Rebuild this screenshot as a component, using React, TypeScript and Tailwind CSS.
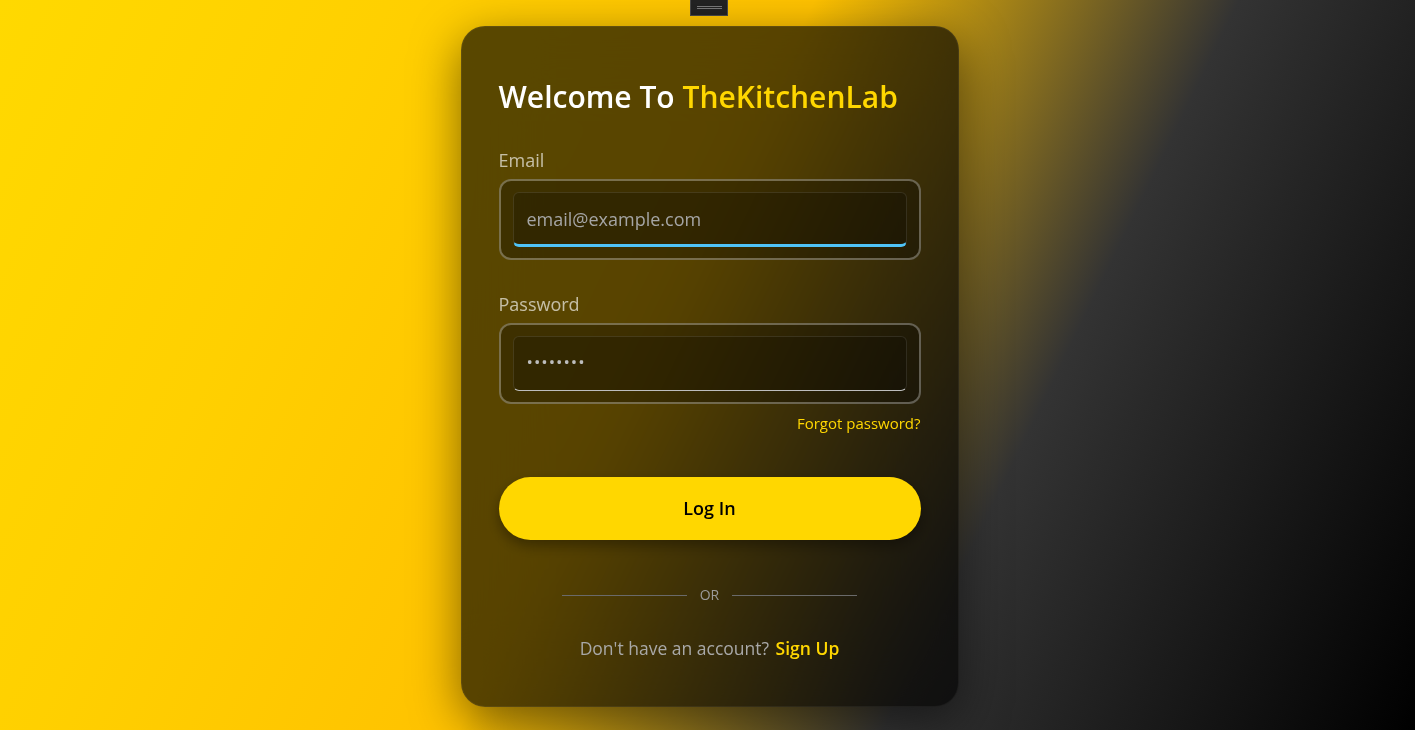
import { useState } from "react";

export default function App() {
  const [email, setEmail] = useState("");
  const [password, setPassword] = useState("password");

  return (
    <div
      className="relative flex min-h-screen w-full justify-center overflow-hidden bg-[linear-gradient(116deg,#ffd900_0%,#ffd000_22%,#ffc200_46%,#333333_70%,#000000_100%)] pl-[4px] pt-[26px] font-['Open_Sans',sans-serif]"
    >
      {/* top drag handle */}
      <div className="absolute left-[690px] top-0 flex h-[16px] w-[38px] flex-col items-center justify-center gap-[1px] border border-t-0 border-[#4a4a4a] bg-[#232323]">
        <span className="h-[1px] w-[25px] bg-[#7a7a7a]" />
        <span className="h-[1px] w-[25px] bg-[#7a7a7a]" />
      </div>

      {/* Login card */}
      <div className="flex h-[681px] w-[498px] flex-col rounded-[24px] border border-white/5 bg-black/65 px-[37px] pt-[52px] shadow-[0_14px_48px_rgba(0,0,0,0.5)] backdrop-blur-2xl">
        <h1 className="text-[30px] font-semibold leading-[36px] text-white">
          Welcome To <span className="text-[#ffd700]">TheKitchenLab</span>
        </h1>

        {/* Email */}
        <label className="mt-[33px] text-[18px] leading-[24px] text-white/65">
          Email
        </label>
        <div className="mt-[7px] h-[81px] rounded-[12px] border-2 border-white/30 bg-black/30 px-[12px] py-[11px]">
          <input
            type="email"
            autoFocus
            value={email}
            onChange={(e) => setEmail(e.target.value)}
            placeholder="email@example.com"
            className="h-[55px] w-full rounded-[6px] border border-b-[3px] border-white/10 border-b-[#4fc3f7] bg-black/20 px-[13px] pt-[1px] text-[18px] text-white caret-white outline-none placeholder:text-[#a5a5a5]"
          />
        </div>

        {/* Password */}
        <label className="mt-[32px] text-[18px] leading-[24px] text-white/65">
          Password
        </label>
        <div className="mt-[7px] h-[81px] rounded-[12px] border-2 border-white/30 bg-black/30 px-[12px] py-[11px]">
          <input
            type="password"
            value={password}
            onChange={(e) => setPassword(e.target.value)}
            className="h-[55px] w-full rounded-[6px] border border-white/10 border-b-[#bdbdbd] bg-black/20 px-[13px] pb-[4px] text-[17px] tracking-[1px] text-[#bdbdbd] outline-none"
          />
        </div>

        <div className="mt-[9px] flex justify-end">
          <a href="#" className="text-[15px] leading-[20px] text-[#ffd700]">
            Forgot password?
          </a>
        </div>

        <button className="mt-[44px] h-[63px] w-full rounded-full bg-[#ffd700] text-[18px] font-semibold text-black shadow-[0_6px_14px_rgba(0,0,0,0.35)]">
          Log In
        </button>

        {/* divider */}
        <div className="mx-auto mt-[45px] flex h-[20px] w-[70%] items-center">
          <span className="h-[1px] flex-1 bg-[#6a6a6a]" />
          <span className="mx-[13px] text-[14px] leading-[20px] text-[#9a9a9a]">
            OR
          </span>
          <span className="h-[1px] flex-1 bg-[#6a6a6a]" />
        </div>

        <p className="mt-[31px] text-center text-[17.5px] leading-[24px] text-[#a8a8a8]">
          Don't have an account?{" "}
          <a href="#" className="ml-[2px] font-semibold text-[#ffd700]">
            Sign Up
          </a>
        </p>
      </div>
    </div>
  );
}
